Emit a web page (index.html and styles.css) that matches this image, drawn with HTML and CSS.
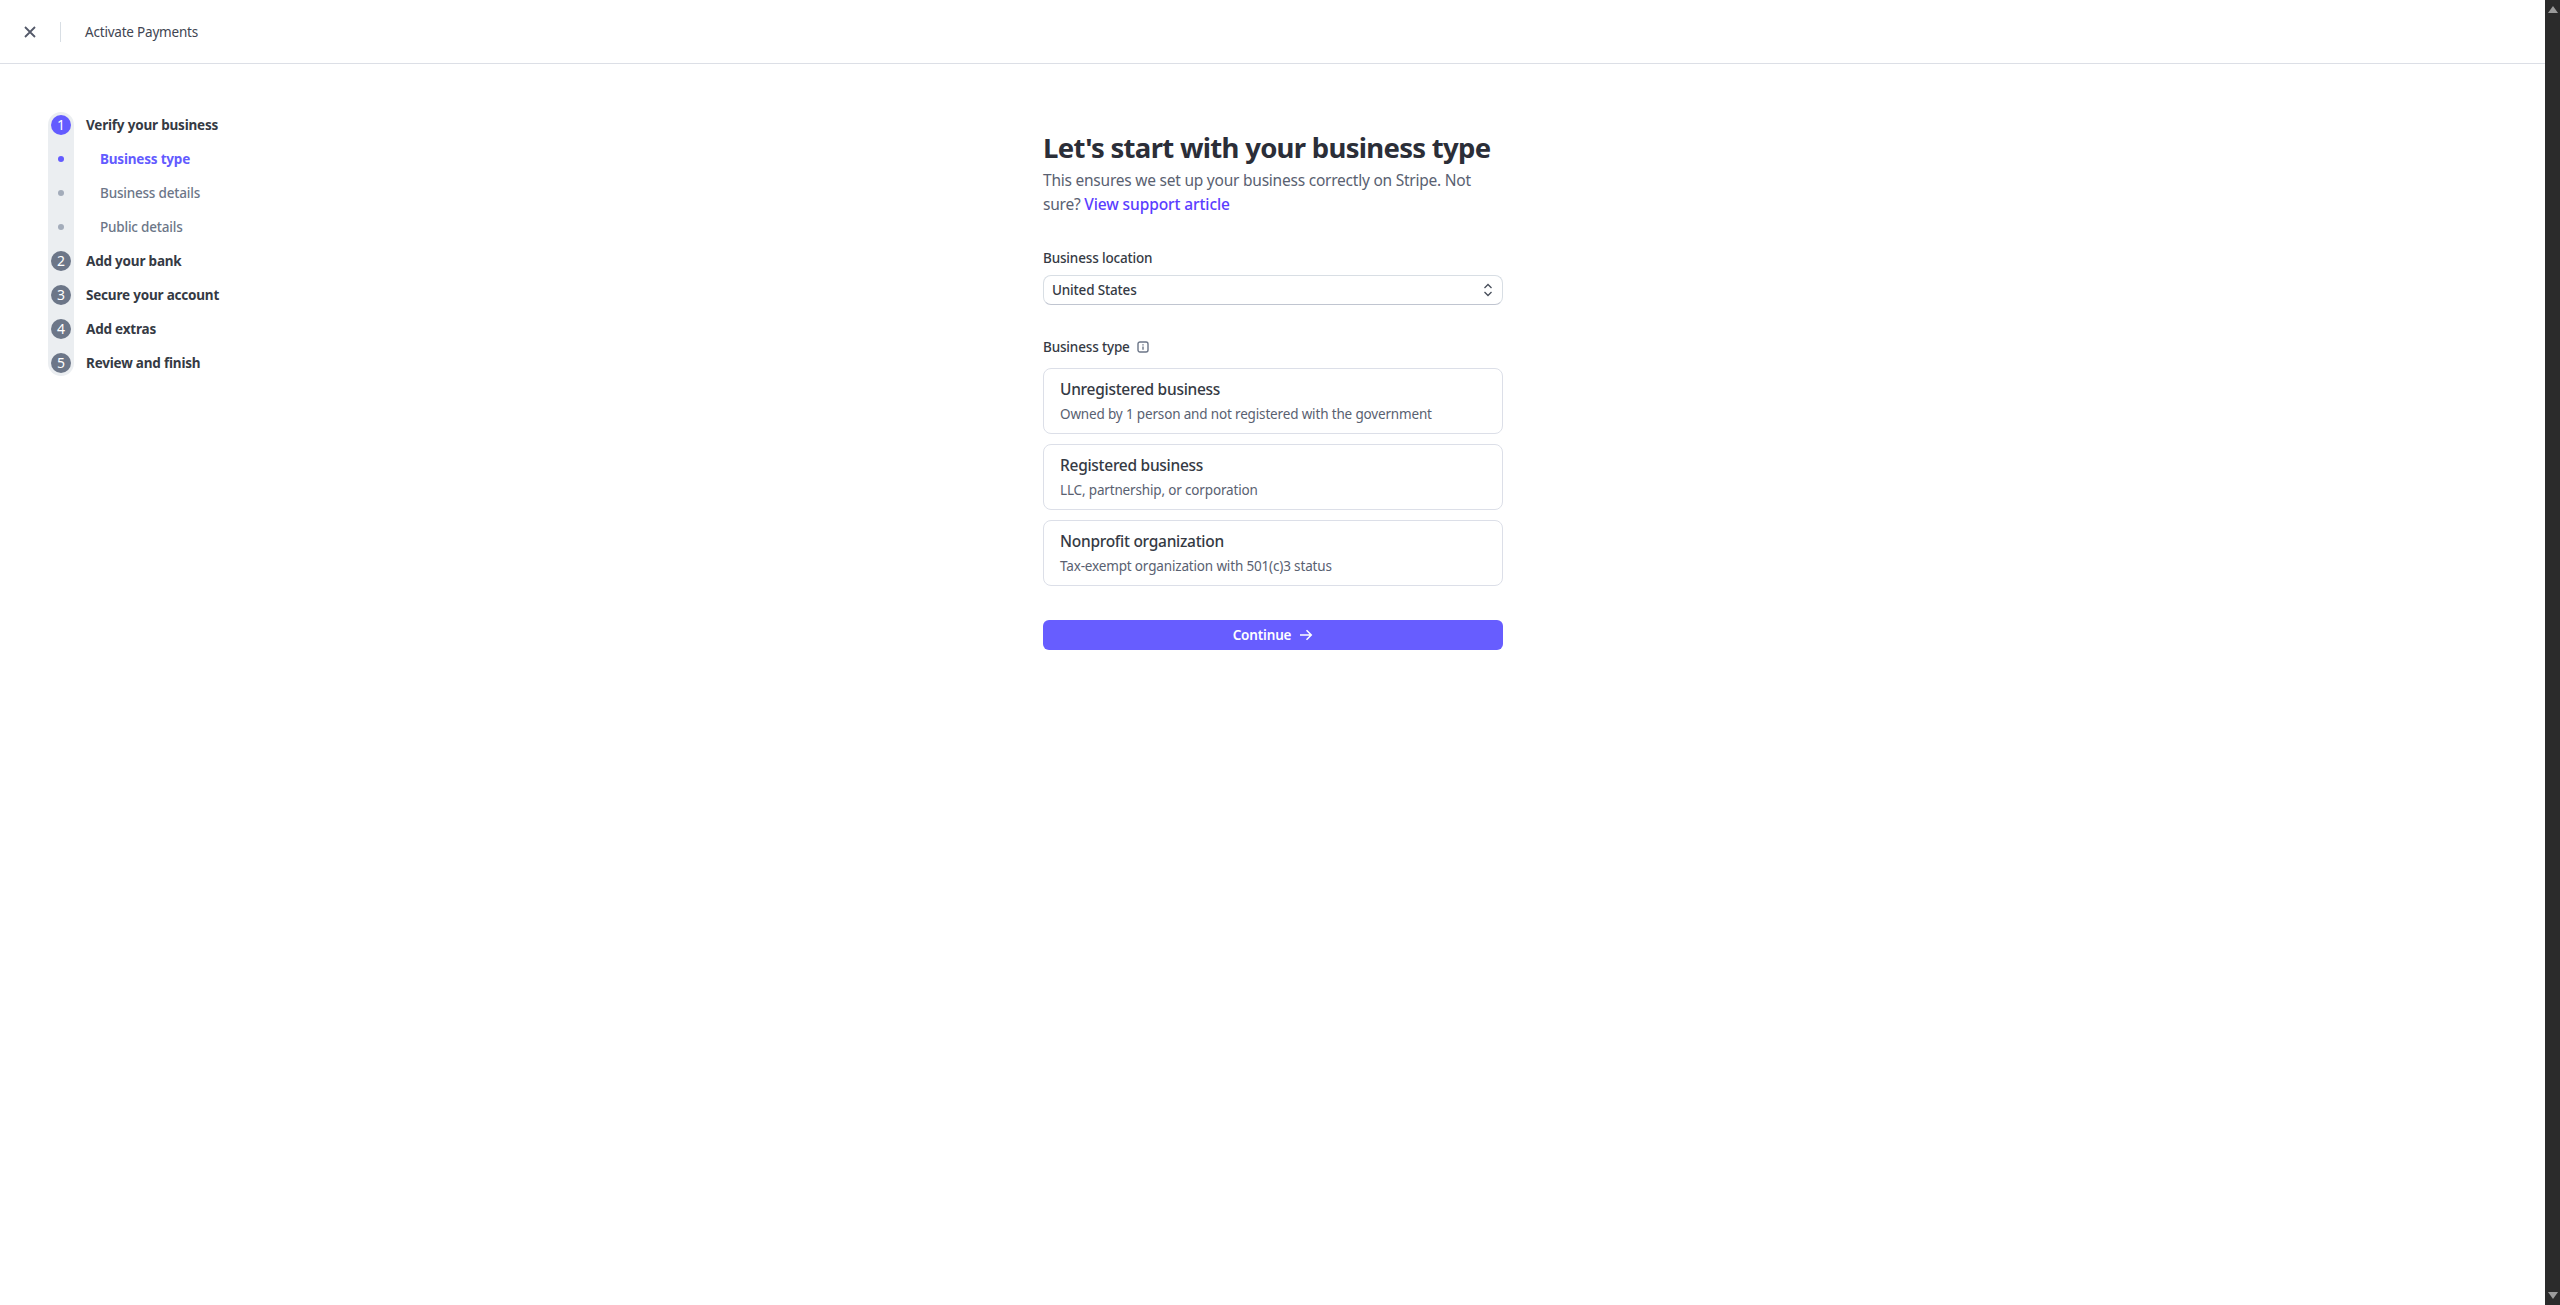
FILE: index.html
```html
<!DOCTYPE html>
<html lang="en">
<head>
  <meta charset="UTF-8">
  <title>Activate Payments</title>
  <link rel="stylesheet" href="styles.css">
</head>
<body>
  <div class="page">
    <header class="topbar">
      <button class="close" type="button" aria-label="Close">
        <svg width="12" height="12" viewBox="0 0 12 12"><path d="M1 1l10 10M11 1L1 11" stroke="#545969" stroke-width="1.8" fill="none"/></svg>
      </button>
      <span class="divider"></span>
      <span class="topbar-title">Activate Payments</span>
    </header>

    <div class="layout">
      <nav class="sidebar">
        <ol class="steps">
          <li class="step"><span class="marker"><span class="num active">1</span></span><span class="step-name">Verify your business</span></li>
          <li class="step sub current"><span class="marker"><span class="dot"></span></span><span class="sub-name">Business type</span></li>
          <li class="step sub"><span class="marker"><span class="dot"></span></span><span class="sub-name">Business details</span></li>
          <li class="step sub"><span class="marker"><span class="dot"></span></span><span class="sub-name">Public details</span></li>
          <li class="step"><span class="marker"><span class="num">2</span></span><span class="step-name">Add your bank</span></li>
          <li class="step"><span class="marker"><span class="num">3</span></span><span class="step-name">Secure your account</span></li>
          <li class="step"><span class="marker"><span class="num">4</span></span><span class="step-name">Add extras</span></li>
          <li class="step"><span class="marker"><span class="num">5</span></span><span class="step-name">Review and finish</span></li>
        </ol>
      </nav>

      <main class="content">
        <h1>Let's start with your business type</h1>
        <p class="intro"><span>This ensures we set up your business correctly on Stripe. Not sure?</span> <a href="#">View support article</a></p>

        <label class="field-label">Business location</label>
        <div class="select">
          <span>United States</span>
          <svg width="10" height="14" viewBox="0 0 10 14"><path d="M1.5 5L5 1.5 8.5 5M1.5 9L5 12.5 8.5 9" stroke="#474e5a" stroke-width="1.3" fill="none"/></svg>
        </div>

        <div class="field-label type-label">
          Business type
          <svg width="12" height="12" viewBox="0 0 12 12"><rect x="1" y="1" width="10" height="10" rx="2" stroke="#6c7688" stroke-width="1.4" fill="none"/><path d="M6 3.2v1.2M6 5.6v3.2" stroke="#6c7688" stroke-width="1.4"/></svg>
        </div>

        <div class="options">
          <div class="option">
            <div class="option-title">Unregistered business</div>
            <div class="option-desc">Owned by 1 person and not registered with the government</div>
          </div>
          <div class="option">
            <div class="option-title">Registered business</div>
            <div class="option-desc">LLC, partnership, or corporation</div>
          </div>
          <div class="option">
            <div class="option-title">Nonprofit organization</div>
            <div class="option-desc">Tax-exempt organization with 501(c)3 status</div>
          </div>
        </div>

        <button class="continue" type="button">
          Continue
          <svg width="14" height="12" viewBox="0 0 14 12"><path d="M1 6h11M7.5 1.2L12.3 6 7.5 10.8" stroke="#fff" stroke-width="1.5" fill="none"/></svg>
        </button>
      </main>
    </div>
  </div>

  <div class="scrollbar">
    <span class="arrow-up"></span>
    <span class="arrow-down"></span>
  </div>
</body>
</html>
```

FILE: styles.css
```css
body {
  margin: 0;
  height: 100vh;
  display: flex;
  overflow: hidden;
  background: #fff;
  color: #353a44;
  font-family: "Noto Sans", Arial, sans-serif;
  font-size: 13.5px;
  letter-spacing: -0.16px;
}
.page {
  flex: 1;
  min-width: 0;
}
.topbar {
  height: 63px;
  border-bottom: 1px solid #dcdfe6;
  display: flex;
  align-items: center;
  padding-left: 24px;
}
.close {
  width: 12px;
  height: 12px;
  padding: 0;
  border: none;
  background: none;
  display: flex;
}
.divider {
  width: 1px;
  height: 20px;
  background: #d8dee4;
  margin: 0 24px;
}
.topbar-title {
  color: #414552;
  letter-spacing: -0.2px;
}
.layout {
  display: grid;
  grid-template-columns: 1fr 460px 1fr;
  padding-left: 1px;
}
.sidebar {
  padding: 44px 0 0 47px;
}
.steps {
  list-style: none;
  margin: 0;
  padding: 0;
  position: relative;
}
.steps::before {
  content: "";
  position: absolute;
  left: 0;
  top: 4px;
  bottom: 4px;
  width: 26px;
  border-radius: 13px;
  background: #ebeef1;
}
.step {
  position: relative;
  height: 34px;
  display: flex;
  align-items: center;
  font-weight: 700;
  letter-spacing: -0.2px;
  color: #353a44;
}
.marker {
  width: 26px;
  display: flex;
  justify-content: center;
  margin-right: 12px;
}
.num {
  width: 20px;
  height: 20px;
  border-radius: 50%;
  background: #6c7688;
  color: #fff;
  font-weight: 400;
  font-size: 14px;
  line-height: 20px;
  text-align: center;
}
.num.active {
  background: #635bff;
}
.dot {
  width: 6px;
  height: 6px;
  border-radius: 50%;
  background: #a3acba;
}
.sub-name {
  margin-left: 14px;
  font-weight: 500;
  color: #6c7688;
}
.current .dot {
  background: #635bff;
}
.current .sub-name {
  font-weight: 700;
  color: #635bff;
}
.content {
  padding-top: 64px;
}
h1 {
  margin: 0;
  font-size: 27.5px;
  line-height: 40px;
  font-weight: 700;
  letter-spacing: -0.7px;
  white-space: nowrap;
  color: #2b2e38;
}
.intro {
  margin: 0 0 32px;
  font-size: 15.5px;
  line-height: 24px;
  letter-spacing: -0.23px;
  color: #596171;
}
.intro a {
  color: #5a3dff;
  font-weight: 500;
  letter-spacing: -0.1px;
  text-decoration: none;
}
.field-label {
  display: block;
  line-height: 20px;
  font-weight: 500;
  color: #353a44;
}
.select {
  box-sizing: border-box;
  height: 30px;
  margin-top: 7px;
  padding: 0 9px 0 8px;
  border: 1px solid #d8dee4;
  border-bottom-color: #c0c5d0;
  border-radius: 8px;
  display: flex;
  align-items: center;
  justify-content: space-between;
  font-weight: 500;
}
.type-label {
  margin-top: 32px;
  display: flex;
  align-items: center;
  gap: 7px;
}
.options {
  margin-top: 11px;
  display: flex;
  flex-direction: column;
  gap: 10px;
}
.option {
  box-sizing: border-box;
  height: 66px;
  padding: 9px 16px;
  border: 1px solid #dcdfe8;
  border-radius: 8px;
}
.option-title {
  font-size: 15.5px;
  line-height: 22px;
  font-weight: 500;
  letter-spacing: -0.28px;
  color: #353a44;
}
.option-desc {
  margin-top: 4px;
  line-height: 20px;
  color: #596171;
}
.continue {
  width: 100%;
  height: 30px;
  margin-top: 34px;
  border: none;
  border-radius: 6px;
  background: #675dff;
  color: #fff;
  font-family: inherit;
  font-size: 13.5px;
  letter-spacing: -0.16px;
  font-weight: 600;
  display: flex;
  align-items: center;
  justify-content: center;
  gap: 8px;
}
.scrollbar {
  width: 15px;
  background: #2b2b2b;
  display: flex;
  flex-direction: column;
  justify-content: space-between;
  align-items: center;
  padding: 6px 0;
  box-sizing: border-box;
}
.arrow-up, .arrow-down {
  width: 0;
  height: 0;
  border-left: 5px solid transparent;
  border-right: 5px solid transparent;
}
.arrow-up {
  border-bottom: 7px solid #9b9b9b;
}
.arrow-down {
  border-top: 7px solid #9b9b9b;
}
```
